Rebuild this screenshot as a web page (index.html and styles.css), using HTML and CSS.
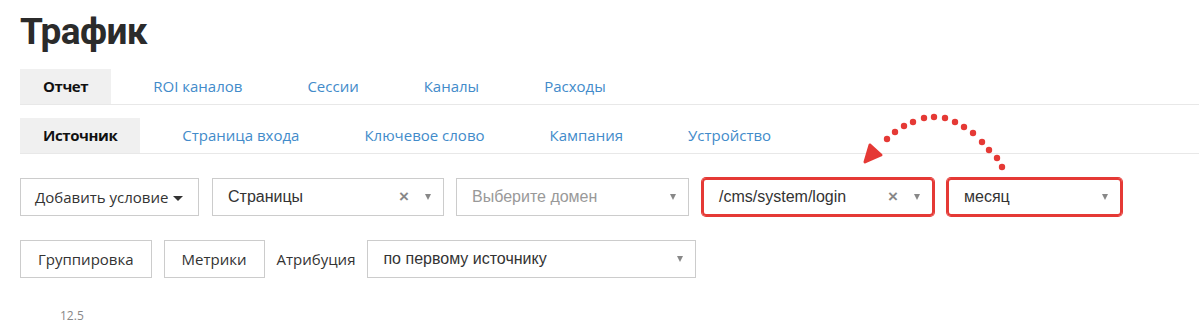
FILE: index.html
```html
<!DOCTYPE html>
<html lang="ru">
<head>
  <meta charset="UTF-8" />
  <title>Трафик</title>
  <link rel="stylesheet" href="styles.css">
</head>
<body>
  <h1>Трафик</h1>

  <div class="tabs">
    <span class="tab active">Отчет</span>
    <a class="tab">ROI каналов</a>
    <a class="tab">Сессии</a>
    <a class="tab">Каналы</a>
    <a class="tab">Расходы</a>
  </div>

  <div class="tabs sub">
    <span class="tab active">Источник</span>
    <a class="tab">Страница входа</a>
    <a class="tab">Ключевое слово</a>
    <a class="tab">Кампания</a>
    <a class="tab">Устройство</a>
  </div>

  <div class="filters">
    <div class="btn add">Добавить условие <span class="caret"></span></div>
    <div class="select w232">
      <span class="value">Страницы</span>
      <span class="clear">×</span><span class="arrow"></span>
    </div>
    <div class="select w233">
      <span class="value placeholder">Выберите домен</span>
      <span class="arrow"></span>
    </div>
    <div class="select w232 marked">
      <span class="value">/cms/system/login</span>
      <span class="clear">×</span><span class="arrow"></span>
    </div>
    <div class="select w175 marked">
      <span class="value">месяц</span>
      <span class="arrow"></span>
    </div>
  </div>

  <div class="filters second">
    <div class="btn">Группировка</div>
    <div class="btn">Метрики</div>
    <span class="label">Атрибуция</span>
    <div class="select w329">
      <span class="value">по первому источнику</span>
      <span class="arrow"></span>
    </div>
  </div>

  <div class="chart">
    <span class="axis">12.5</span>
  </div>

  <!-- annotation arrow from "месяц" to the page filter -->
  <svg class="note" width="1199" height="324" viewBox="0 0 1199 324">
    <g fill="#e53935">
      <circle cx="1002" cy="167" r="3.2"/>
      <circle cx="997" cy="158" r="3.2"/>
      <circle cx="989" cy="150" r="3.2"/>
      <circle cx="982" cy="142" r="3.2"/>
      <circle cx="973" cy="133" r="3.2"/>
      <circle cx="964" cy="127" r="3.2"/>
      <circle cx="955" cy="122" r="3.2"/>
      <circle cx="945" cy="118" r="3.2"/>
      <circle cx="934" cy="117" r="3.2"/>
      <circle cx="924" cy="118" r="3.2"/>
      <circle cx="913" cy="122" r="3.2"/>
      <circle cx="904" cy="126" r="3.2"/>
      <circle cx="895" cy="132" r="3.2"/>
      <circle cx="887" cy="139" r="3.2"/>
    </g>
    <path d="M870 145 L881 155 L865 162 Z" fill="#e53935" stroke="#e53935" stroke-width="3" stroke-linejoin="round"/>
  </svg>
</body>
</html>
```

FILE: styles.css
```css
body {
  margin: 0;
  padding: 0 0 0 20px;
  font-family: "Open Sans", sans-serif;
  color: #333;
  background: #fff;
  overflow: hidden;
}
h1 {
  margin: 0;
  padding-top: 10px;
  height: 59px;
  font-family: Roboto, sans-serif;
  font-size: 37px;
  line-height: 44px;
  font-weight: 700;
  letter-spacing: -0.6px;
  color: #2b2b2b;
}
.tabs {
  display: flex;
  gap: 19px;
  border-bottom: 1px solid #e8e8e8;
  margin-bottom: 13px;
}
.tab {
  padding: 0 23px;
  height: 35px;
  line-height: 35px;
  font-size: 15px;
  color: #428bca;
}
.tab.active {
  background: #f0f0f0;
  color: #111;
  font-weight: 700;
  letter-spacing: -0.4px;
}
.filters {
  display: flex;
  align-items: center;
  gap: 12px;
  margin-top: 24px;
}
.filters.second {
  margin-top: 24px;
  gap: 12px;
}
.btn {
  box-sizing: border-box;
  height: 38px;
  line-height: 36px;
  padding: 0 17px;
  border: 1px solid #ccc;
  font-size: 15px;
  color: #333;
  white-space: nowrap;
}
.btn.add {
  width: 179px;
  padding: 0 14px;
  margin-right: 1px;
}
.caret {
  display: inline-block;
  vertical-align: middle;
  margin-left: 1px;
  border-top: 5px solid #333;
  border-left: 5px solid transparent;
  border-right: 5px solid transparent;
}
.label {
  font-size: 15px;
  color: #333;
}
.select {
  box-sizing: border-box;
  height: 38px;
  display: flex;
  align-items: center;
  padding: 0 12px 0 15px;
  border: 1px solid #ccc;
  font-family: "Liberation Sans", Arial, sans-serif;
  font-size: 16px;
  color: #333;
}
.select .value {
  flex: 1;
}
.select .placeholder {
  color: #999;
}
.select .clear {
  color: #888;
  font-weight: 700;
  font-size: 17px;
  margin-right: 16px;
}
.arrow {
  border-top: 6px solid #888;
  border-left: 3.5px solid transparent;
  border-right: 3.5px solid transparent;
}
.w232 { width: 232px; }
.w233 { width: 233px; }
.w175 { width: 175px; }
.w329 { width: 329px; }
.marked {
  border-color: #e53935;
  border-width: 2px;
  border-radius: 4px;
  box-shadow: 0 0 0 1px #e53935;
  margin-left: 1px;
}
.chart {
  padding: 29px 0 0 40px;
  line-height: 14px;
}
.axis {
  font-size: 12px;
  color: #888;
}
.note {
  position: absolute;
  left: 0;
  top: 0;
  pointer-events: none;
}
```
